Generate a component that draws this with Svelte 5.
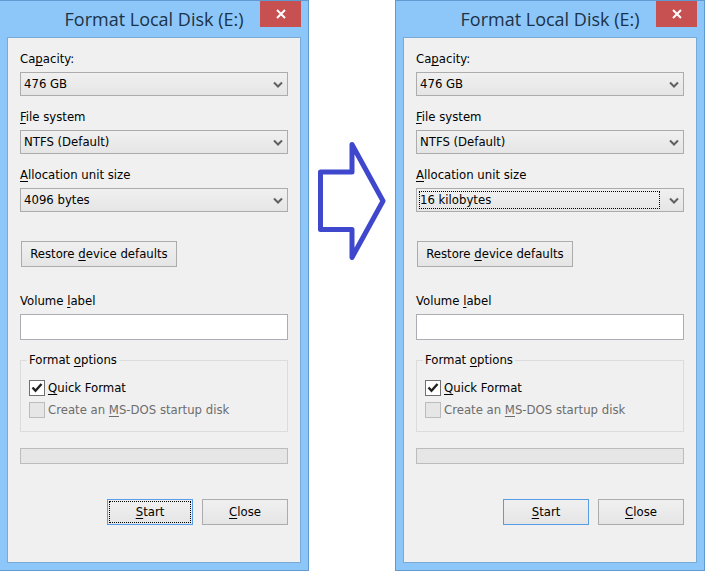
<script>
	const capacities = ['476 GB'];
	const fileSystems = ['NTFS (Default)', 'exFAT'];
	const unitSizes = ['4096 bytes', '8192 bytes', '16 kilobytes', '32 kilobytes'];

	let dialogs = $state([
		{ id: 'before', capacity: '476 GB', fileSystem: 'NTFS (Default)', unitSize: '4096 bytes', label: '', quick: true, focus: 'start' },
		{ id: 'after', capacity: '476 GB', fileSystem: 'NTFS (Default)', unitSize: '16 kilobytes', label: '', quick: true, focus: 'unit' }
	]);
</script>

<!-- text with its access key underlined -->
{#snippet mnemonic(before, key, after)}{before}<u>{key}</u>{after}{/snippet}

{#snippet chevron()}
	<svg class="chevron" viewBox="0 0 10 8" aria-hidden="true">
		<path d="M1 1.5 L5 5.5 L9 1.5" />
	</svg>
{/snippet}

{#snippet dialog(d)}
	<section class="window" aria-labelledby="{d.id}-title">
		<header>
			<h1 id="{d.id}-title">Format Local Disk (E:)</h1>
			<button class="exit" aria-label="Close window">
				<svg viewBox="0 0 12 10" aria-hidden="true">
					<path d="M2 1 L10 9 M10 1 L2 9" />
				</svg>
			</button>
		</header>

		<form class="panel" onsubmit={(e) => e.preventDefault()}>
			<div class="field">
				<label for="{d.id}-capacity">{@render mnemonic('Ca', 'p', 'acity:')}</label>
				<div class="combo">
					<select id="{d.id}-capacity" bind:value={d.capacity}>
						{#each capacities as c}<option>{c}</option>{/each}
					</select>
					{@render chevron()}
				</div>
			</div>

			<div class="field">
				<label for="{d.id}-fs">{@render mnemonic('', 'F', 'ile system')}</label>
				<div class="combo">
					<select id="{d.id}-fs" bind:value={d.fileSystem}>
						{#each fileSystems as f}<option>{f}</option>{/each}
					</select>
					{@render chevron()}
				</div>
			</div>

			<div class="field">
				<label for="{d.id}-unit">{@render mnemonic('', 'A', 'llocation unit size')}</label>
				<div class="combo" class:focused={d.focus === 'unit'}>
					<select id="{d.id}-unit" bind:value={d.unitSize}>
						{#each unitSizes as u}<option>{u}</option>{/each}
					</select>
					{@render chevron()}
				</div>
			</div>

			<button type="button" class="btn restore">{@render mnemonic('Restore ', 'd', 'evice defaults')}</button>

			<div class="field">
				<label for="{d.id}-label">{@render mnemonic('Volume ', 'l', 'abel')}</label>
				<input id="{d.id}-label" type="text" class="text" bind:value={d.label} />
			</div>

			<fieldset>
				<legend>{@render mnemonic('Format ', 'o', 'ptions')}</legend>
				<div class="check">
					<input id="{d.id}-quick" type="checkbox" bind:checked={d.quick} />
					<label for="{d.id}-quick">{@render mnemonic('', 'Q', 'uick Format')}</label>
					{#if d.quick}
						<svg class="tick" viewBox="0 0 16 16" aria-hidden="true">
							<path d="M3.5 7.5 L6.5 10.8 L12.5 4" />
						</svg>
					{/if}
				</div>
				<div class="check disabled">
					<input id="{d.id}-dos" type="checkbox" disabled />
					<label for="{d.id}-dos">{@render mnemonic('Create an ', 'M', 'S-DOS startup disk')}</label>
				</div>
			</fieldset>

			<div class="progress" role="progressbar" aria-label="Format progress" aria-valuenow="0"></div>

			<div class="actions">
				<button type="submit" class="btn default" class:focused={d.focus === 'start'}>{@render mnemonic('', 'S', 'tart')}</button>
				<button type="button" class="btn">{@render mnemonic('', 'C', 'lose')}</button>
			</div>
		</form>
	</section>
{/snippet}

<main>
	{@render dialog(dialogs[0])}
	<svg class="arrow" viewBox="0 0 86 130" aria-hidden="true">
		<path d="M11.5 36 H43 V8.5 L74 65 L43 121.5 V93.5 H11.5 Z" />
	</svg>
	{@render dialog(dialogs[1])}
</main>

<style>
	:global(body) {
		background: #fff;
		overflow-x: hidden;
	}

	main {
		display: grid;
		grid-template-columns: 1fr 86px 1fr;
		align-items: start;
		margin-left: -1px;
		font: 13px/16px "DejaVu Sans Condensed", Tahoma, sans-serif;
		color: #000;
	}

	.window {
		padding: 0 7px 7px;
		border: 1px solid #5f9bd0;
		background: #8dc7fa;
	}

	header {
		display: grid;
		grid-template-columns: 41px 1fr 41px;
		align-items: start;
		height: 36px;
	}

	h1 {
		grid-column: 2;
		margin: 0;
		font: 18px/36px "Open Sans", sans-serif;
		text-align: center;
		white-space: nowrap;
		color: #1c3246;
	}

	.exit {
		display: grid;
		place-items: center;
		height: 26px;
		padding: 0;
		border: 0;
		background: #c75050;
	}

	.exit svg {
		width: 12px;
		height: 10px;
		fill: none;
		stroke: #fff;
		stroke-width: 2;
	}

	.panel {
		display: flex;
		flex-direction: column;
		padding: 13px 12px 37px;
		border: 1px solid #78aad6;
		background: #f0f0f0;
	}

	u {
		text-decoration-thickness: 1px;
		text-underline-offset: 2px;
		text-decoration-skip-ink: none;
	}

	.field {
		display: flex;
		flex-direction: column;
		gap: 5px;
	}

	.field + .field {
		margin-top: 13px;
	}

	.combo {
		position: relative;
		display: grid;
	}

	select {
		appearance: none;
		height: 24px;
		padding: 0 24px 0 3px;
		border: 1px solid #acacac;
		border-radius: 0;
		background: linear-gradient(#f0f0f0, #e5e5e5);
		font: inherit;
		color: inherit;
	}

	.chevron {
		position: absolute;
		right: 5px;
		top: 9px;
		width: 10px;
		height: 8px;
		fill: none;
		stroke: #606060;
		stroke-width: 2;
		pointer-events: none;
	}

	.combo.focused::after {
		content: '';
		position: absolute;
		inset: 3px 24px 3px 3px;
		border: 1px dotted #000;
		pointer-events: none;
	}

	.btn {
		width: 86px;
		height: 26px;
		padding: 0;
		border: 1px solid #acacac;
		background: linear-gradient(#f0f0f0, #e5e5e5);
		font: inherit;
		color: inherit;
	}

	.btn.default {
		border-color: #569de5;
	}

	.btn.focused {
		outline: 1px dotted #000;
		outline-offset: -3px;
	}

	.restore {
		width: 156px;
		margin: 29px 0 26px 1px;
	}

	.text {
		box-sizing: border-box;
		height: 26px;
		padding: 0 4px;
		border: 1px solid #abadb3;
		background: #fff;
		font: inherit;
	}

	fieldset {
		display: flex;
		flex-direction: column;
		gap: 6px;
		min-width: 0;
		margin: 12px 0 16px;
		padding: 12px 8px 13px;
		border: 1px solid #dcdcdc;
	}

	legend {
		margin-left: -2px;
		padding: 0 2px;
	}

	.check {
		position: relative;
		display: flex;
		gap: 3px;
		white-space: nowrap;
	}

	.check input {
		appearance: none;
		flex: none;
		width: 16px;
		height: 16px;
		margin: 0;
		border: 1px solid #707070;
		background: #fff;
	}

	.check.disabled {
		color: #6d6d6d;
	}

	.check.disabled input {
		border-color: #bcbcbc;
		background: #e6e6e6;
	}

	.tick {
		position: absolute;
		left: 0;
		top: 0;
		width: 16px;
		height: 16px;
		fill: none;
		stroke: #212121;
		stroke-width: 2.4;
		pointer-events: none;
	}

	.progress {
		height: 14px;
		border: 1px solid #bcbcbc;
		background: #e6e6e6;
	}

	.actions {
		display: flex;
		justify-content: flex-end;
		gap: 9px;
		margin-top: 35px;
	}

	.arrow {
		width: 86px;
		height: 130px;
		margin-top: 136px;
		fill: #fff;
		stroke: #3f48cc;
		stroke-width: 5;
		stroke-linejoin: round;
	}
</style>
